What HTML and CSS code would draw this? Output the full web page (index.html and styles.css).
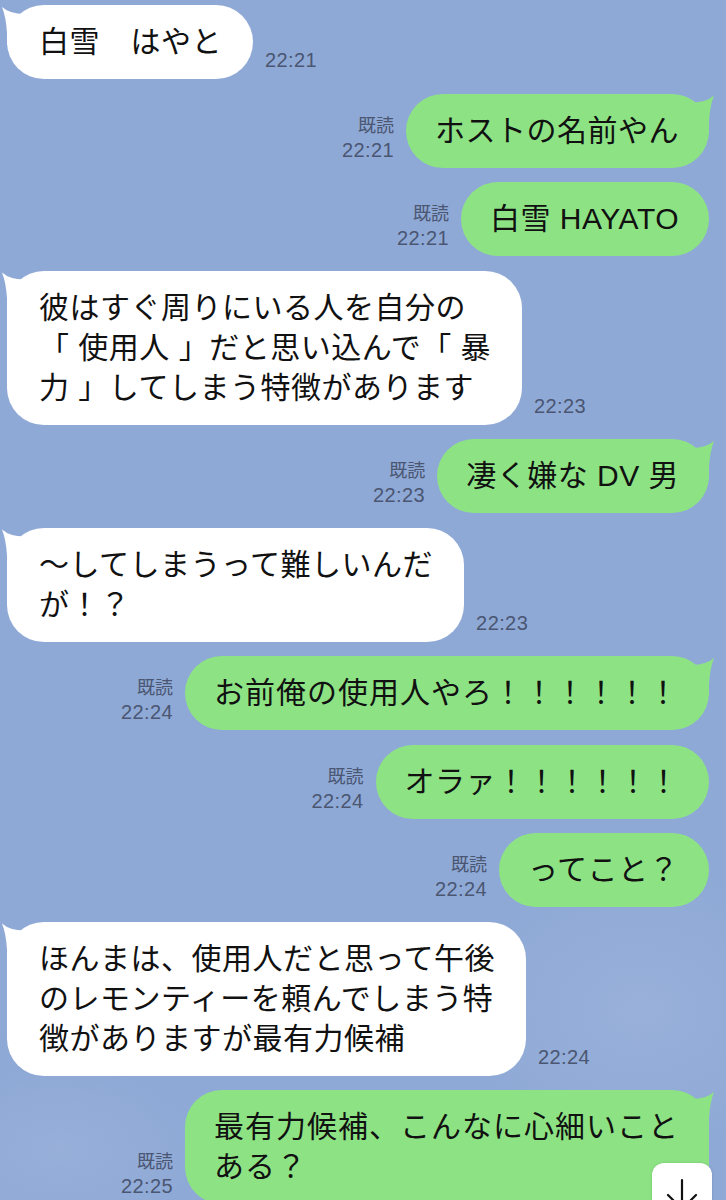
FILE: index.html
```html
<!DOCTYPE html>
<html lang="ja">
<head>
<meta charset="utf-8">
<title>LINE</title>
<link rel="stylesheet" href="styles.css">
</head>
<body>
<div class="chat">
  <div class="row in">
    <div class="bubble in">白雪　はやと</div>
    <div class="time">22:21</div>
  </div>
  <div class="row out">
    <div class="meta"><span>既読</span><span class="t">22:21</span></div>
    <div class="bubble out">ホストの名前やん</div>
  </div>
  <div class="row out">
    <div class="meta"><span>既読</span><span class="t">22:21</span></div>
    <div class="bubble out plain">白雪 HAYATO</div>
  </div>
  <div class="row in">
    <div class="bubble in">彼はすぐ周りにいる人を自分の<br>「 使用人 」だと思い込んで「 暴<br>力 」してしまう特徴があります</div>
    <div class="time">22:23</div>
  </div>
  <div class="row out">
    <div class="meta"><span>既読</span><span class="t">22:23</span></div>
    <div class="bubble out">凄く嫌な DV 男</div>
  </div>
  <div class="row in">
    <div class="bubble in">〜してしまうって難しいんだ<br>が！？</div>
    <div class="time">22:23</div>
  </div>
  <div class="row out">
    <div class="meta"><span>既読</span><span class="t">22:24</span></div>
    <div class="bubble out wide">お前俺の使用人やろ！！！！！！</div>
  </div>
  <div class="row out">
    <div class="meta"><span>既読</span><span class="t">22:24</span></div>
    <div class="bubble out plain">オラァ！！！！！！</div>
  </div>
  <div class="row out">
    <div class="meta"><span>既読</span><span class="t">22:24</span></div>
    <div class="bubble out plain">ってこと？</div>
  </div>
  <div class="row in">
    <div class="bubble in">ほんまは、使用人だと思って午後<br>のレモンティーを頼んでしまう特<br>徴がありますが最有力候補</div>
    <div class="time">22:24</div>
  </div>
  <div class="row out">
    <div class="meta"><span>既読</span><span class="t">22:25</span></div>
    <div class="bubble out wide">最有力候補、こんなに心細いこと<br>ある？</div>
  </div>

  <div class="scroll-down">
    <svg width="60" height="60" viewBox="0 0 60 60" aria-hidden="true">
      <path d="M30 17 V46 M16 32 L30 46 L44 32" fill="none" stroke="#111" stroke-width="2.2" stroke-linecap="round" stroke-linejoin="round"/>
    </svg>
  </div>
</div>
</body>
</html>
```

FILE: styles.css
```css
* { box-sizing: border-box; }

html, body {
  margin: 0;
  padding: 0;
  background: #8fa9d6;
}

.chat {
  position: relative;
  height: 1200px;
  overflow: hidden;
  padding: 5px 17px 0 7px;
  display: flex;
  flex-direction: column;
  gap: 14.5px;
  background:
    radial-gradient(ellipse 260px 200px at 640px 1010px, rgba(170,190,225,0.35), rgba(170,190,225,0) 70%),
    radial-gradient(ellipse 200px 120px at 60px 1150px, rgba(170,190,225,0.3), rgba(170,190,225,0) 70%),
    #8fa9d6;
  font-family: "Liberation Sans", "Noto Sans CJK JP", sans-serif;
}

.row {
  display: flex;
  align-items: flex-end;
  gap: 12px;
}

.row.out {
  justify-content: flex-end;
}

.bubble {
  position: relative;
  font-size: 30px;
  line-height: 40px;
  letter-spacing: 0.5px;
  color: #111;
  padding: 17px 31px 17px 32px;
  border-radius: 37px;
  white-space: nowrap;
}

.bubble.in {
  background: #ffffff;
}

.bubble.out {
  background: #8de384;
  padding: 17px 30px 17px 29px;
}

.bubble.out.wide {
  letter-spacing: 1px;
}

.bubble::before {
  content: "";
  position: absolute;
  top: 0;
  width: 34px;
  height: 40px;
  clip-path: path("M2 2 Q10 9 24 9 L34 9 L34 40 L7 40 L7 28 Q6 12 2 2 Z");
}

.bubble.in::before {
  left: -7px;
  background: #ffffff;
}

.bubble.out::before {
  right: -7px;
  background: #8de384;
  transform: scaleX(-1);
}

.bubble.plain::before {
  display: none;
}

.time {
  font-size: 20px;
  line-height: 24px;
  letter-spacing: 0.4px;
  color: #4a5672;
  padding-bottom: 7px;
}

.meta {
  display: flex;
  flex-direction: column;
  align-items: flex-end;
  padding-bottom: 6px;
  color: #4a5672;
}

.meta span {
  font-size: 18px;
  line-height: 24px;
}

.meta .t {
  font-size: 20px;
  letter-spacing: 0.4px;
}

.scroll-down {
  position: absolute;
  right: 14px;
  top: 1163px;
  width: 60px;
  height: 60px;
  background: #ffffff;
  border-radius: 12px;
  box-shadow: 0 0 3px rgba(0,0,0,0.15);
}

.scroll-down svg {
  display: block;
}
```
